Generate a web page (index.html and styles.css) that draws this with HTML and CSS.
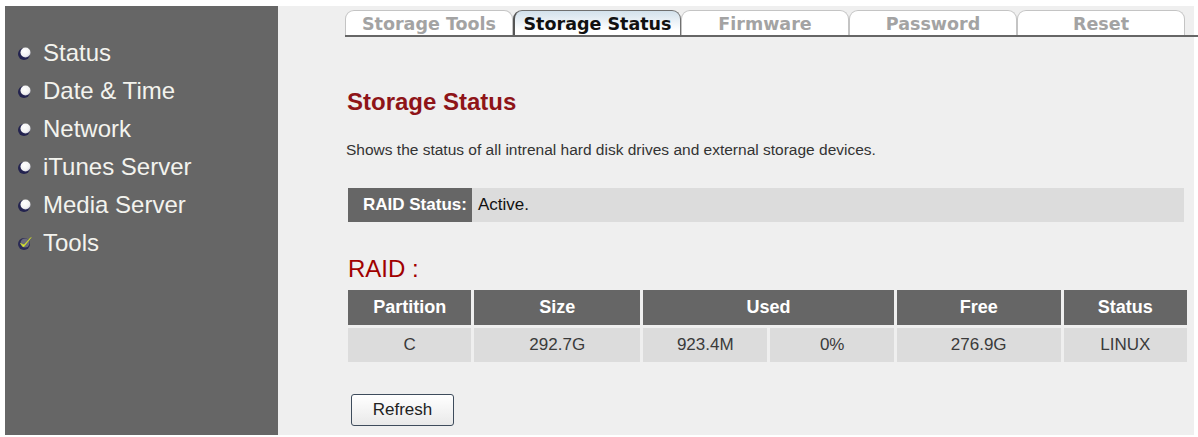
FILE: index.html
```html
<!DOCTYPE html>
<html>
<head>
<meta charset="utf-8">
<title>Storage Status</title>
<link rel="stylesheet" href="styles.css">
</head>
<body>
<div class="frame">
  <nav class="sidebar">
    <ul class="menu">
      <li class="item"><svg class="bullet" width="16" height="16" viewBox="0 0 16 16"><circle cx="7" cy="9" r="6" fill="#23234f"/><circle cx="8.5" cy="7.5" r="5" fill="url(#g1)"/><defs><radialGradient id="g1" cx="0.4" cy="0.35" r="0.7"><stop offset="0" stop-color="#ffffff"/><stop offset="0.7" stop-color="#f2f2f2"/><stop offset="1" stop-color="#c8c8d8"/></radialGradient></defs></svg><span>Status</span></li>
      <li class="item"><svg class="bullet" width="16" height="16" viewBox="0 0 16 16"><circle cx="7" cy="9" r="6" fill="#23234f"/><circle cx="8.5" cy="7.5" r="5" fill="url(#g1)"/></svg><span>Date &amp; Time</span></li>
      <li class="item"><svg class="bullet" width="16" height="16" viewBox="0 0 16 16"><circle cx="7" cy="9" r="6" fill="#23234f"/><circle cx="8.5" cy="7.5" r="5" fill="url(#g1)"/></svg><span>Network</span></li>
      <li class="item"><svg class="bullet" width="16" height="16" viewBox="0 0 16 16"><circle cx="7" cy="9" r="6" fill="#23234f"/><circle cx="8.5" cy="7.5" r="5" fill="url(#g1)"/></svg><span>iTunes Server</span></li>
      <li class="item"><svg class="bullet" width="16" height="16" viewBox="0 0 16 16"><circle cx="7" cy="9" r="6" fill="#23234f"/><circle cx="8.5" cy="7.5" r="5" fill="url(#g1)"/></svg><span>Media Server</span></li>
      <li class="item"><svg class="bullet" width="16" height="16" viewBox="0 0 16 16"><circle cx="7" cy="9" r="6" fill="#2a2a55"/><circle cx="8" cy="8" r="4.5" fill="#6a6a7a"/><path d="M3.5 8.5 L6.5 12 L14 2.5 L7 10 Z" fill="#e4ef3c" stroke="#c8d62a" stroke-width="0.8" stroke-linejoin="round"/></svg><span>Tools</span></li>
    </ul>
  </nav>
  <main class="main">
    <div class="tabs">
      <div class="tab">Storage Tools</div>
      <div class="tab active">Storage Status</div>
      <div class="tab">Firmware</div>
      <div class="tab">Password</div>
      <div class="tab">Reset</div>
    </div>
    <h1 class="title">Storage Status</h1>
    <p class="desc">Shows the status of all intrenal hard disk drives and external storage devices.</p>
    <div class="statusbar">
      <div class="status-label">RAID Status:</div>
      <div class="status-value">Active.</div>
    </div>
    <h2 class="raid">RAID :</h2>
    <table class="grid">
      <colgroup>
        <col class="c-part"><col class="c-size"><col class="c-used1"><col class="c-used2"><col class="c-free"><col class="c-stat">
      </colgroup>
      <thead>
        <tr><th>Partition</th><th>Size</th><th colspan="2">Used</th><th>Free</th><th>Status</th></tr>
      </thead>
      <tbody>
        <tr><td>C</td><td>292.7G</td><td>923.4M</td><td>0%</td><td>276.9G</td><td>LINUX</td></tr>
      </tbody>
    </table>
    <button class="btn" type="button">Refresh</button>
  </main>
</div>
</body>
</html>
```
FILE: styles.css
```css
html, body {
  margin: 0;
  padding: 0;
  background: #ffffff;
}
body {
  font-family: "Liberation Sans", Arial, sans-serif;
}
.frame {
  display: flex;
  margin: 6px 4px 0 5px;
  height: 429px;
}
.sidebar {
  width: 273px;
  flex: none;
  background: #666666;
}
.menu {
  list-style: none;
  margin: 0;
  padding: 28px 0 0 0;
}
.item {
  display: flex;
  align-items: center;
  height: 38px;
  font-size: 24px;
  color: #f3f3ee;
}
.bullet {
  margin-left: 12px;
  margin-right: 10px;
  flex: none;
}
.main {
  flex: 1;
  background: #efefef;
  padding: 0 10px 0 68px;
  min-width: 0;
}
.tabs {
  display: flex;
  margin: 4px -14px 0 -1px;
  border-bottom: 2px solid #666666;
  height: 25px;
}
.tab {
  width: 168px;
  flex: none;
  height: 25px;
  box-sizing: border-box;
  border: 1px solid #c4c4c4;
  border-bottom: none;
  border-radius: 9px 9px 0 0;
  background: #ffffff;
  font-family: "DejaVu Sans", Verdana, sans-serif;
  font-weight: bold;
  font-size: 17.5px;
  color: #a3a3a3;
  text-align: center;
  line-height: 22px;
  padding-top: 2px;
  overflow: hidden;
  white-space: nowrap;
}
.tab.active {
  background: linear-gradient(#d3e1ec, #ffffff 80%);
  border: 1px solid #707070;
  border-left: 2px solid #555555;
  border-bottom: none;
  color: #111111;
}
.title {
  margin: 51px 0 0 1px;
  font-size: 24px;
  line-height: 28px;
  font-weight: bold;
  color: #8e1418;
}
.desc {
  margin: 24px 0 0 0;
  font-size: 15.5px;
  line-height: 20px;
  color: #333333;
}
.statusbar {
  display: flex;
  margin: 28px 0 0 2px;
  height: 34px;
  background: #dcdcdc;
  font-size: 17px;
  line-height: 34px;
}
.status-label {
  width: 124px;
  box-sizing: border-box;
  padding-left: 15px;
  background: #666666;
  color: #ffffff;
  font-weight: bold;
}
.status-value {
  padding-left: 6px;
  color: #111111;
}
.raid {
  margin: 33px 0 0 2px;
  font-size: 24px;
  line-height: 28px;
  font-weight: normal;
  color: #a00000;
}
.grid {
  margin: 4px 0 0 -1px;
  border-collapse: separate;
  border-spacing: 3px;
  table-layout: fixed;
  width: 845px;
}
.c-part { width: 123px; }
.c-size { width: 165px; }
.c-used1 { width: 124px; }
.c-used2 { width: 123px; }
.c-free { width: 163px; }
.c-stat { width: 123px; }
.grid th {
  height: 35px;
  padding: 0;
  background: #666666;
  color: #ffffff;
  font-size: 18px;
  font-weight: bold;
  text-align: center;
}
.grid td {
  height: 34px;
  padding: 0;
  background: #dcdcdc;
  color: #3a3a3a;
  font-size: 17px;
  text-align: center;
}
.btn {
  display: block;
  margin: 29px 0 0 5px;
  width: 103px;
  height: 32px;
  border: 1px solid #3e4c5c;
  border-radius: 3px;
  background: linear-gradient(#ffffff, #e9e9e9);
  font-family: "Liberation Sans", Arial, sans-serif;
  font-size: 17px;
  color: #222222;
  padding: 0;
}
```
